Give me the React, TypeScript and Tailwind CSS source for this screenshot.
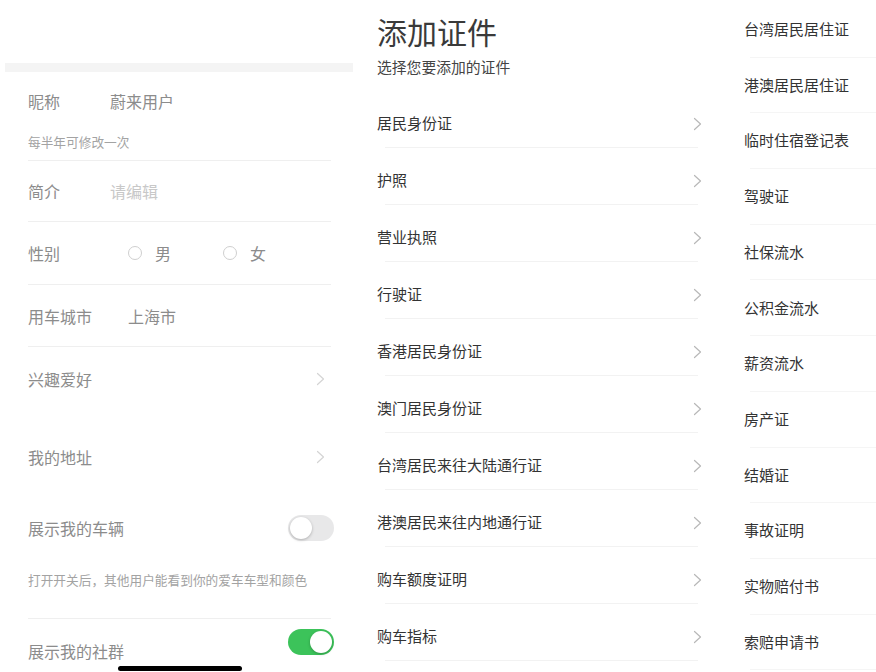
import React from "react"

const font = { fontFamily: '"Noto Sans CJK SC", "Noto Sans", sans-serif' }

const certs = [
  "居民身份证",
  "护照",
  "营业执照",
  "行驶证",
  "香港居民身份证",
  "澳门居民身份证",
  "台湾居民来往大陆通行证",
  "港澳居民来往内地通行证",
  "购车额度证明",
  "购车指标",
]

const more = [
  "台湾居民居住证",
  "港澳居民居住证",
  "临时住宿登记表",
  "驾驶证",
  "社保流水",
  "公积金流水",
  "薪资流水",
  "房产证",
  "结婚证",
  "事故证明",
  "实物赔付书",
  "索赔申请书",
]

function Chevron({ color = "#b8b8b8" }: { color?: string }) {
  return (
    <svg width="9" height="14" viewBox="0 0 9 14" fill="none">
      <polyline points="1.5,1.5 7.5,7 1.5,12.5" stroke={color} strokeWidth="1.2" strokeLinecap="round" strokeLinejoin="round" />
    </svg>
  )
}

function Toggle({ on }: { on: boolean }) {
  return (
    <div
      className={`relative w-[46px] h-[26px] rounded-full ${on ? "bg-[#3cc35a]" : "bg-[#e8e8e9]"}`}
    >
      <div
        className={`absolute top-[2px] w-[22px] h-[22px] rounded-full bg-white shadow-[0_1px_3px_rgba(0,0,0,0.25)] ${on ? "right-[2px]" : "left-[2px]"}`}
      />
    </div>
  )
}

function Radio({ label }: { label: string }) {
  return (
    <div className="flex items-center gap-[13px]">
      <span className="w-[14px] h-[14px] rounded-full border-[1.5px] border-[#cfcfcf]" />
      <span>{label}</span>
    </div>
  )
}

function ProfilePanel() {
  return (
    <div className="relative w-[358px] h-full overflow-hidden bg-white text-[16px] text-[#8c8c8c]">
      <div className="h-[63px]" />
      <div className="mx-[5px] h-[9px] bg-[#f4f4f4]" />
      <div className="pl-[28px] pr-[24px]">
        <div className="flex items-center h-[22px] mt-[18px]">
          <span className="w-[82px]">昵称</span>
          <span>蔚来用户</span>
        </div>
        <div className="mt-[21px] h-[18px] flex items-center text-[12.7px] text-[#a3a3a3]">每半年可修改一次</div>
        <div className="h-[10px] border-b border-[#efefef] mr-[3px]" />
        <div className="flex items-center h-[61px] border-b border-[#efefef] mr-[3px]">
          <span className="w-[82px]">简介</span>
          <span className="text-[#c8c8c8]">请编辑</span>
        </div>
        <div className="flex items-center h-[63px] border-b border-[#efefef] mr-[3px]">
          <span className="w-[100px]">性别</span>
          <div className="flex items-center gap-[52px]">
            <Radio label="男" />
            <Radio label="女" />
          </div>
        </div>
        <div className="flex items-center h-[62px] border-b border-[#efefef] mr-[3px]">
          <span className="w-[100px]">用车城市</span>
          <span>上海市</span>
        </div>
        <div className="flex items-center justify-between h-[64px] pr-[9px]">
          <span>兴趣爱好</span>
          <Chevron color="#d4d4d4" />
        </div>
        <div className="flex items-center justify-between h-[64px] mt-[14px] pr-[9px]">
          <span>我的地址</span>
          <Chevron color="#d4d4d4" />
        </div>
        <div className="flex items-center justify-between h-[64px] mt-[7px]">
          <span>展示我的车辆</span>
          <Toggle on={false} />
        </div>
        <div className="flex items-center h-[20px] mt-[10px] text-[12.7px] text-[#a3a3a3]">打开开关后，其他用户能看到你的爱车车型和颜色</div>
        <div className="h-[29px] border-b border-[#efefef] mr-[3px]" />
        <div className="flex items-center justify-between h-[64px]">
          <span>展示我的社群</span>
          <div className="mb-[18px]">
            <Toggle on={true} />
          </div>
        </div>
      </div>
      <div className="absolute left-[118px] bottom-[1px] w-[124px] h-[5px] rounded-full bg-black" />
    </div>
  )
}

function CertPanel() {
  return (
    <div className="w-[362px] h-full bg-white text-[#333333] pl-[19px]">
      <div className="pt-[13px] h-[49px] text-[30px] leading-[36px] text-[#3a3a3a]">添加证件</div>
      <div className="mt-[8px] h-[20px] leading-[20px] text-[14.8px] text-[#444444]">选择您要添加的证件</div>
      <div className="mt-[14px] text-[15px]">
        {certs.map((c) => (
          <div key={c} className="h-[57px] flex flex-col">
            <div className="h-[48px] mt-[9px] flex items-center justify-between pr-[18px]">
              <span>{c}</span>
              <Chevron />
            </div>
            <div className="ml-[8px] mr-[22px] border-b border-[#f2f2f2]" />
          </div>
        ))}
      </div>
    </div>
  )
}

function MorePanel() {
  return (
    <div className="flex-1 h-full bg-white text-[15px] text-[#333333] pl-[24px] pt-[2px]">
      {more.map((m) => (
        <div key={m} className="h-[55.7px] flex flex-col">
          <div className="flex-1 flex items-center">{m}</div>
          <div className="ml-[6px] border-b border-[#f5f5f5]" />
        </div>
      ))}
    </div>
  )
}

export default function App() {
  return (
    <div className="w-[876px] h-[672px] flex bg-white overflow-hidden" style={font}>
      <ProfilePanel />
      <CertPanel />
      <MorePanel />
    </div>
  )
}
